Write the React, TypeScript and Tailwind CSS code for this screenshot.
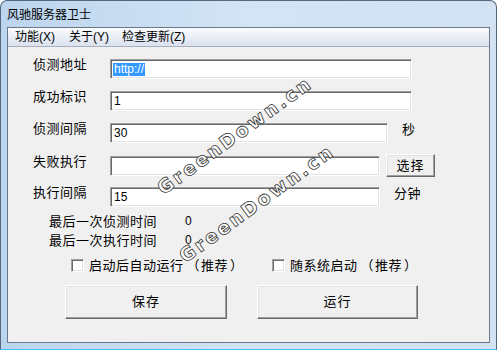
import React from "react";

const CJK = "font-['Liberation_Sans','Noto_Sans_CJK_SC',sans-serif]";

function Input({ w, children }: { w: string; children?: React.ReactNode }) {
  return (
    <div
      className={`${w} h-[20px] bg-white border border-t-[#a0a0a0] border-l-[#a0a0a0] border-b-white border-r-white shadow-[inset_1px_1px_0_#696969,inset_-1px_-1px_0_#e3e3e3] flex items-center pl-[3px] text-[12px] text-black font-['Liberation_Sans',sans-serif] leading-[13px]`}
    >
      {children}
    </div>
  );
}

function Btn({ w, h, children, extra = "" }: { w: string; h: string; children: React.ReactNode; extra?: string }) {
  return (
    <div
      className={`${w} ${h} ${extra} bg-[#f0f0f0] border border-t-white border-l-white border-b-[#696969] border-r-[#696969] shadow-[inset_-1px_-1px_0_#a0a0a0,inset_1px_1px_0_#e3e3e3] flex items-center justify-center text-[13px] tracking-[1px] text-black ${CJK}`}
    >
      {children}
    </div>
  );
}

function Check() {
  return (
    <div className="w-[13px] h-[13px] bg-white border border-t-[#a0a0a0] border-l-[#a0a0a0] border-b-white border-r-white shadow-[inset_1px_1px_0_#696969,inset_-1px_-1px_0_#e3e3e3] shrink-0" />
  );
}

function Label({ children }: { children: React.ReactNode }) {
  return (
    <div className={`w-[77px] shrink-0 text-[13px] leading-[14px] tracking-[0.5px] text-black self-start -mt-[1px] ${CJK}`}>
      {children}
    </div>
  );
}

function Rec() {
  return (
    <>
      <span className="ml-[3px] mr-[1px]">（</span>推荐<span className="ml-[2px]">）</span>
    </>
  );
}

export default function App() {
  return (
    <div className="w-[497px] h-[350px] relative overflow-hidden">
      <div className="w-[497px] h-[350px] rounded-t-[7px] border border-[#55677d] border-b-[#3fc3f2] bg-linear-to-r from-[#bcd5ee] via-[#d3e4f5] to-[#d2e2f3] flex flex-col">
        {/* Title bar */}
        <div className={`h-[26px] shrink-0 flex items-center pl-[6px] pt-[1px] text-[12px] text-black ${CJK}`}>
          风驰服务器卫士
        </div>
        {/* Client */}
        <div className="ml-[6px] w-[483px] h-[316px] border border-[#6a7889] bg-[#f0f0f0] flex flex-col">
          {/* Menu bar */}
          <div className={`h-[19px] shrink-0 bg-linear-to-b from-[#fbfcfe] via-[#e9eef6] to-[#dbe2ee] border-b border-[#a9b1c1] flex items-center text-[12px] text-black ${CJK}`}>
            <span className="ml-[7px]">功能(X)</span>
            <span className="ml-[14px]">关于(Y)</span>
            <span className="ml-[13px]">检查更新(Z)</span>
          </div>
          {/* Content */}
          <div className="pl-[25px] pt-[12px] flex flex-col">
            <div className="flex h-[20px] items-center">
              <Label>侦测地址</Label>
              <Input w="w-[302px]">
                <span className="bg-[#3399ff] text-white px-[1px] -ml-[1px] leading-[13px]">http://</span>
              </Input>
            </div>
            <div className="flex h-[20px] items-center mt-[12px]">
              <Label>成功标识</Label>
              <Input w="w-[302px]">1</Input>
            </div>
            <div className="flex h-[20px] items-center mt-[12px]">
              <Label>侦测间隔</Label>
              <Input w="w-[278px]">30</Input>
              <span className={`ml-[14px] self-start text-[13px] leading-[14px] ${CJK}`}>秒</span>
            </div>
            <div className="flex h-[20px] items-start mt-[13px]">
              <Label>失败执行</Label>
              <Input w="w-[270px]" />
              <Btn w="w-[49px]" h="h-[23px]" extra="ml-[6px] -mt-[2px] shrink-0">选择</Btn>
            </div>
            <div className="flex h-[20px] items-center mt-[11px]">
              <Label>执行间隔</Label>
              <Input w="w-[270px]">15</Input>
              <span className={`ml-[14px] self-start text-[13px] leading-[14px] tracking-[0.5px] ${CJK}`}>分钟</span>
            </div>
            <div className={`mt-[5px] ml-[16px] flex flex-col text-[13px] leading-[19px] tracking-[0.5px] text-black ${CJK}`}>
              <div className="flex">
                <span className="w-[136px]">最后一次侦测时间</span>
                <span className="font-['Liberation_Sans',sans-serif] text-[12px]">0</span>
              </div>
              <div className="flex">
                <span className="w-[136px]">最后一次执行时间</span>
                <span className="font-['Liberation_Sans',sans-serif] text-[12px]">0</span>
              </div>
            </div>
            <div className={`mt-[9px] ml-[38px] flex items-center h-[13px] text-[13px] leading-[14px] tracking-[0.5px] text-black ${CJK}`}>
              <div className="w-[201px] flex items-center">
                <Check />
                <span className="ml-[5px] whitespace-nowrap">启动后自动运行<Rec /></span>
              </div>
              <div className="flex items-center">
                <Check />
                <span className="ml-[5px] whitespace-nowrap">随系统启动<Rec /></span>
              </div>
            </div>
            <div className="mt-[13px] ml-[32px] flex">
              <Btn w="w-[162px]" h="h-[34px]">保存</Btn>
              <Btn w="w-[161px]" h="h-[34px]" extra="ml-[30px]">运行</Btn>
            </div>
          </div>
        </div>
      </div>
      {/* Watermarks */}
      <div className="absolute left-[165px] top-[178px] h-[20px] leading-[20px] origin-[0_100%] -rotate-[36deg] whitespace-nowrap text-[19px] font-bold tracking-[2.5px] text-white font-['DejaVu_Sans',sans-serif] [-webkit-text-stroke:0.8px_#333] pointer-events-none">
        GreenDown.cn
      </div>
      <div className="absolute left-[187px] top-[246px] h-[20px] leading-[20px] origin-[0_100%] -rotate-[36deg] whitespace-nowrap text-[19px] font-bold tracking-[2.5px] text-white font-['DejaVu_Sans',sans-serif] [-webkit-text-stroke:0.8px_#333] pointer-events-none">
        GreenDown.cn
      </div>
    </div>
  );
}
